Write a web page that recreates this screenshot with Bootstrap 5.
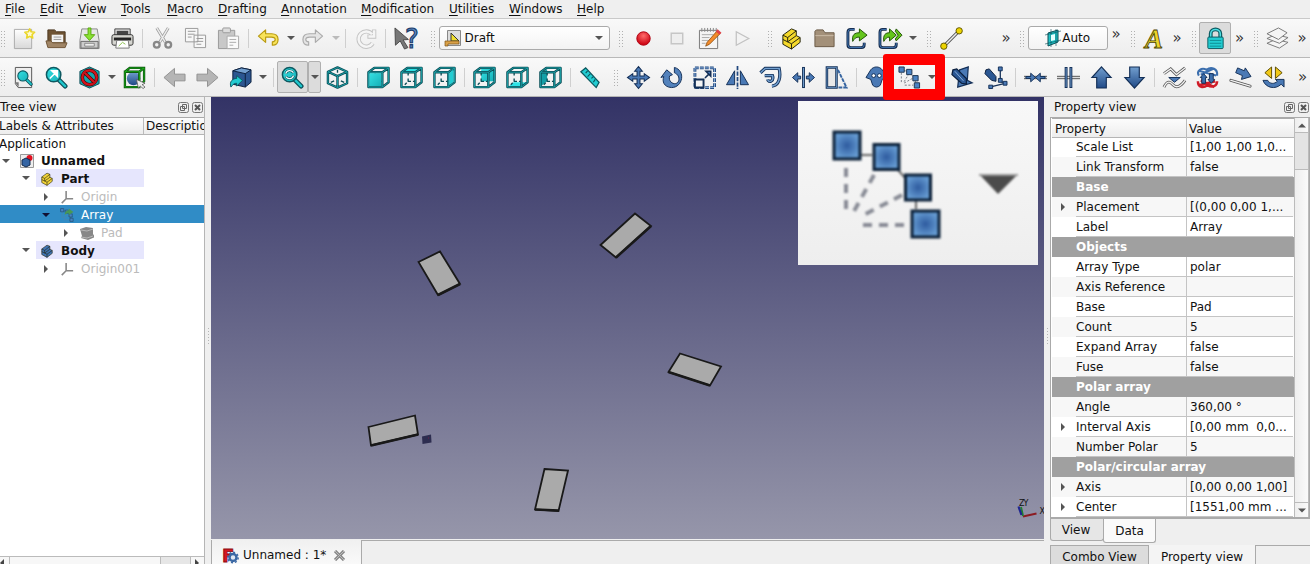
<!DOCTYPE html>
<html lang="en">
<head>
<meta charset="utf-8">
<title>FreeCAD</title>
<link href="https://cdn.jsdelivr.net/npm/bootstrap@5.3.0/dist/css/bootstrap.min.css" rel="stylesheet">
<style>
body{font:12px/16px "DejaVu Sans",sans-serif;color:#111;background:#efefef;height:564px;width:1310px;overflow:hidden}
.menus{height:18px;padding-left:5px;background:#efefef}
.menus a{color:#111;text-decoration:none;white-space:pre;line-height:18px}
.menus u{text-underline-offset:2px}
.bar{height:39px;border-top:1px solid #c9c9c9;background:linear-gradient(#f9f9f9,#ededed)}
.bar2{height:40px;border-bottom:1px solid #b5b5b5;border-top-color:#b8b8b8}
.tool{width:33px;height:32px;flex:none;display:flex;align-items:center;justify-content:center}
.tool svg{width:23px;height:23px;display:block;overflow:visible}
.drop{width:11px;flex:none;display:flex;justify-content:center}
.drop::before{content:"";border:4px solid transparent;border-top-color:#555;border-bottom:0}
.off::before{border-top-color:#bbb}
.rule{width:7px;flex:none;display:flex;justify-content:center}
.rule::before{content:"";width:1px;height:19px;background:#cfcfcf}
.grip{width:16.5px;flex:none;height:17px;padding-left:8px}
.grip::before{content:"";display:block;width:6px;height:17px;background:radial-gradient(circle,#b0b0b0 .8px,transparent 1px) 0 0/3px 3px}
.grip0{width:7px;padding-left:0}
.more{flex:none;color:#333;font-size:15px;line-height:12px;text-align:center}
.combo{width:172px;height:24px;border:1px solid #aaa;border-radius:3px;background:linear-gradient(#fff,#f3f3f3)}
.pressed{border:1px solid #b0b0b0;background:#dcdcdc;border-radius:2px}
.frame{position:absolute;left:-10px;top:-7px;width:62px;height:46px;border:10px solid red;border-width:11px 10px 11px 11px;border-radius:3px;z-index:4}
.left-pane{width:205px;border-right:1px solid #b5b5b5}
.titlebar{height:20px;line-height:20px}
.titlebar svg{width:11px;height:11px}
.cols{height:18px;border-top:1px solid #aaa;border-bottom:1px solid #b5b5b5;background:linear-gradient(#fcfcfc,#ededed);line-height:17px}
.tree-row{height:18px;line-height:18px;white-space:nowrap}
.nudge{padding-top:1px}
.tree-row svg{width:14px;height:14px;flex:none}
.caret{width:20px;flex:none;display:flex;justify-content:center}
.caret::before{content:"";border:4px solid transparent;border-top-color:#555;border-bottom:0}
.sel .caret::before{border-top-color:#113}
.shut::before{border:4px solid transparent;border-left-color:#555;border-right:0}
.lav{background:#e6e6fd;width:108px;height:18px}
.sel{background:#308cc6;color:#fff}
.dim{color:#bbb}
.scene{height:442px;background:linear-gradient(#333366,#9696aa)}
.loupe{position:absolute;left:587px;top:4px;width:240px;height:164px;background:linear-gradient(#f8f8f8,#eee)}
.doc-tab{width:151px;border-right:1px solid #aaa;border-left:1px solid #aaa;background:linear-gradient(#f0f0f0,#fafafa)}
.right-pane{width:260px}
.props{border:1px solid #aaa;border-bottom:2px solid #aaa;height:402px;padding:0 0 0 1px;background:#fff}
.prow{height:20px;line-height:20px;display:flex}
.prow>i{width:24px;flex:none;display:flex;align-items:center;padding-left:9px}
.prow>i.x::before{content:"";border:4px solid transparent;border-left-color:#555;border-right:0}
.prow>b,.prow>span{border-bottom:1px solid #c4c4c4;font-weight:400;white-space:pre}
.prow>b{width:111px;border-right:1px solid #c4c4c4;flex:none}
.prow>span{flex:1;padding-left:3px;margin-right:1px}
.alt{background:#f7f7f7}
.grp{background:#a0a0a0;color:#fff;font-weight:700;padding-left:24px}
.sb{width:14px;border-left:1px solid #bbb;background:linear-gradient(90deg,#eee,#fafafa)}
.sb div{display:flex;align-items:center;justify-content:center}
.tab-b{border:1px solid #aaa;text-align:center}
</style>
<script src="https://cdn.jsdelivr.net/npm/bootstrap@5.3.0/dist/js/bootstrap.bundle.min.js"></script>
</head>
<body>
<svg width="0" height="0" class="position-absolute">
<defs>
<linearGradient id="gb" x1="0" y1="0" x2="0" y2="1"><stop offset="0" stop-color="#729fcf"/><stop offset="1" stop-color="#204a87"/></linearGradient>
<linearGradient id="gt" x1="0" y1="0" x2="1" y2="1"><stop offset="0" stop-color="#34e0e2"/><stop offset="1" stop-color="#16b0b8"/></linearGradient>
<linearGradient id="gg" x1="0" y1="0" x2="0" y2="1"><stop offset="0" stop-color="#fff"/><stop offset="1" stop-color="#d8d8d8"/></linearGradient>
<radialGradient id="gr" cx=".5" cy=".3" r=".6"><stop offset="0" stop-color="#ff6a6a"/><stop offset="1" stop-color="#d00a18"/></radialGradient>
</defs>
<!-- wireframe cube shared by the view icons -->
<symbol id="wire" viewBox="0 0 24 24"><g fill="none" stroke-linejoin="round"><path d="M8.500 7v3M8.500 13v3h3M5 19.500l2-2M13.500 16h2" stroke="#0b4c55" stroke-width="1.400"/><path d="M1.500 6.500h14.500v15.500H1.500zM1.500 6.500l6-4.500H22.500V17L16 22M16 6.500l6.500-4.500" stroke="#0b4c55" stroke-width="2.500"/><path d="M1.500 6.500h14.500v15.500H1.500zM1.500 6.500l6-4.500H22.500V17L16 22M16 6.500l6.500-4.500" stroke="#1da9af" stroke-width=".9"/></g></symbol>
<symbol id="lens" viewBox="0 0 24 24"><path d="M14 14l7 7" stroke="#0b4c55" stroke-width="5" stroke-linecap="round"/><path d="M14 14l7 7" stroke="#1fc6cc" stroke-width="2.500" stroke-linecap="round"/><circle cx="9" cy="9" r="7.500" fill="url(#gt)" stroke="#0d5961" stroke-width="1.600"/></symbol>
<symbol id="brick" viewBox="0 0 24 24"><g stroke-width="1" stroke-linejoin="round" stroke="#20200a"><path d="M3 8.500L12 2l5 2v5l4 2v5l-9 7-9-5z"/><path d="M3 8.500l5 2.500 9-7M8 11v4.500l4 2 9-6.500M12 17.500V23M3 13l5 2.500 9-6.500" fill="none"/></g></symbol>
<symbol id="axes" viewBox="0 0 16 16"><path d="M7 1v9h8M7 10l-5 5" fill="none" stroke="#888" stroke-width="1.800"/></symbol>
<symbol id="undo" viewBox="0 0 24 24"><path d="M1.500 9.500L9 3v4h6c4.500 0 7 2.500 7 6s-2 6-6 6v-3.500c2-.2 3-1 3-2.500s-1.300-2.500-4-2.500H9v5.500z" stroke-width="1.200" stroke-linejoin="round"/></symbol>
<symbol id="polar" viewBox="0 0 24 24"><path d="M4 4l7 2 6 6 2 7" fill="none" stroke="#444" stroke-width=".6"/><path d="M3.500 7v11M11.500 8L6 17M15 13l-9 5M7 20h9" fill="none" stroke="#777d87" stroke-width="1" stroke-dasharray="2.200 1.600"/><g fill="#4b82c2" stroke="#1d3450" stroke-width="1"><path d="M1 1h5.500v5.500H1zM9 3.500h5.500V9H9zM15.500 10h5.500v5.500h-5.500zM17 17.500h5.500V23H17z"/></g></symbol>
<symbol id="float" viewBox="0 0 11 11"><rect x=".5" y=".5" width="10" height="10" rx="2" fill="none" stroke="#777"/><path d="M4.500 2.500h4v4h-4zM2.500 4.500h4v4h-4z" fill="none" stroke="#666"/></symbol>
<symbol id="shutx" viewBox="0 0 11 11"><rect x=".5" y=".5" width="10" height="10" rx="2" fill="none" stroke="#777"/><path d="M3 3l5 5M8 3l-5 5" stroke="#555" stroke-width="2"/></symbol>
</svg>

<nav class="menus d-flex"><a style="width:35px"><u>F</u>ile</a><a style="width:38px"><u>E</u>dit</a><a style="width:43px"><u>V</u>iew</a><a style="width:46px"><u>T</u>ools</a><a style="width:51px"><u>M</u>acro</a><a style="width:63px"><u>D</u>rafting</a><a style="width:80px"><u>A</u>nnotation</a><a style="width:88px"><u>M</u>odification</a><a style="width:60px"><u>U</u>tilities</a><a style="width:68px"><u>W</u>indows</a><a><u>H</u>elp</a></nav>

<div class="bar d-flex align-items-center">
<span class="grip grip0"></span>
<span class="tool"><svg viewBox="0 0 24 24"><path d="M2.500 2.500h18v20h-18z" fill="url(#gg)" stroke="#aaa"/><path d="M18.500 2l1.500 3 3.600.5-2.600 2.500.6 3.500-3.100-1.700-3.200 1.700.6-3.500-2.500-2.500 3.500-.5z" fill="#fffbd0" stroke="#ead62a" stroke-width="1.700" stroke-linejoin="round"/></svg></span>
<span class="tool"><svg viewBox="0 0 24 24"><path d="M3 19V3h7l2 2h9v14z" fill="#6f5434" stroke="#4a361f"/><path d="M7 8h12v8H7z" fill="#f3f3f3"/><path d="M9 10.500h8M9 13h8" stroke="#999"/><path d="M1 14.500h5l2 2h15l-2 5H3z" fill="#a08566" stroke="#6f5434"/></svg></span>
<span class="tool"><svg viewBox="0 0 24 24"><path d="M4 2h16l2 12v8.500H2V14z" fill="#e6e6e6" stroke="#888"/><path d="M3 15h18v7H3z" fill="#ccc" stroke="#666"/><path d="M7 17h10v3H7z" fill="#eee" stroke="#888"/><path d="M10.500 1h3v7h4l-5.500 6-5.500-6h4z" fill="#8ae234" stroke="#5aa80e"/></svg></span>
<span class="tool"><svg viewBox="0 0 24 24"><path d="M4 2h16v9H4z" fill="#ddd" stroke="#444"/><path d="M6 4h12v5H6z" fill="#444"/><rect x="1" y="8" width="22" height="11" rx="2" fill="#d5d5d0" stroke="#333"/><path d="M3 11h18v3H3z" fill="#222"/><path d="M6 14h12l1 8H5z" fill="#fff" stroke="#777"/><path d="M8 20l4-4 3 2" stroke="#8ac04a" fill="none"/></svg></span>
<span class="rule"></span>
<span class="tool"><svg viewBox="0 0 24 24"><path d="M6 1l9 15M18 1L9 16" stroke="#999" stroke-width="3"/><path d="M6 1l9 15M18 1L9 16" stroke="#ececec" stroke-width="1.500"/><g fill="none" stroke="#888" stroke-width="2.400"><circle cx="6" cy="18.500" r="3"/><circle cx="18" cy="18.500" r="3"/></g></svg></span>
<span class="tool"><svg viewBox="0 0 24 24"><g fill="#f7f7f7" stroke="#999"><path d="M1.500 1.500h13v14h-13zM10.500 8.500h12v13h-12z"/></g><path d="M4 4.500h8M4 7.500h7M4 10.500h4M13 12h7M13 15h7M13 18h5" stroke="#999"/></svg></span>
<span class="tool"><svg viewBox="0 0 24 24"><path d="M1.500 3.500h17v19h-17z" fill="#c8c8c8" stroke="#999"/><rect x="6" y="1" width="8" height="5" rx="1" fill="#ddd" stroke="#999"/><path d="M10.500 9.500h12v13h-12z" fill="#fafafa" stroke="#aaa"/><path d="M13 13h7M13 16h7M13 19h4" stroke="#aaa"/></svg></span>
<span class="rule"></span>
<span class="tool"><svg fill="#f8e35a" stroke="#b89a10"><use href="#undo"/></svg></span><span class="drop"></span>
<span class="tool"><svg fill="#e4e4e4" stroke="#aaa" viewBox="0 0 24 24"><use href="#undo" width="24" height="24" transform="matrix(-1 0 0 1 24 0)"/></svg></span><span class="drop off" style="width:13px"></span>
<span class="rule"></span>
<span class="tool"><svg viewBox="0 0 24 24"><g fill="none"><path d="M19 7.500a8 8 0 1 0 .5 9.500M21 2.500v7.500h-7" stroke="#c4c4c4" stroke-width="4.500"/><path d="M19 7.500a8 8 0 1 0 .5 9.500M21 3.500v6.500h-6" stroke="#f5f5f5" stroke-width="2.600"/></g></svg></span>
<span class="rule"></span>
<span class="tool"><svg viewBox="0 0 24 24"><text x="11.500" y="22" font-family="DejaVu Sans" font-size="27" fill="#5c8cc6" stroke="#1d3d6b" stroke-width="1.200">?</text><path d="M1 1l14 12-5.500.5 5 8-3.500 1.500-4.500-8.500-5 4.500z" fill="#777" stroke="#4a4a4a"/></svg></span>
<span class="grip"></span>
<span class="combo d-flex align-items-center ps-1"><svg width="17" height="17" viewBox="0 0 17 17"><path d="M3.500.5h13v15h-13z" fill="#ddd" stroke="#888"/><path d="M7 3v8h8z" fill="#f0df30" stroke="#333"/><path d="M1 11h14v3H4v2H1z" fill="#d9a047" stroke="#7b5518" stroke-width=".7"/></svg><span class="ms-1">Draft</span><span class="drop ms-auto me-1"></span></span>
<span class="grip" style="width:17.500px"></span>
<span class="tool"><svg viewBox="0 0 24 24"><circle cx="12" cy="12" r="7" fill="url(#gr)" stroke="#b00010"/></svg></span>
<span class="tool"><svg viewBox="0 0 24 24"><path d="M6.500 6.500h12v11h-12z" fill="#eee" stroke="#c6c6c6" stroke-width="1.500"/></svg></span>
<span class="tool"><svg viewBox="0 0 24 24"><path d="M1.500 3.500h19v19h-19z" fill="#f4f4f4" stroke="#777"/><path d="M4 1v4M7 1v4M10 1v4M13 1v4M16 1v4M19 1v4" stroke="#888"/><path d="M4 8h12M4 11h8M4 14h7M4 17h4" stroke="#aaa"/><path d="M20 4l3 3-11 11-4 2 1.500-4z" fill="#f38b2a" stroke="#84480c" stroke-width=".8"/><path d="M19.500 3.500l4 3.500" stroke="#df4248" stroke-width="3"/></svg></span>
<span class="tool"><svg viewBox="0 0 24 24"><path d="M5.500 5v14L18.500 12z" fill="#f3f3f3" stroke="#c2c2c2" stroke-width="1.300"/></svg></span>
<span class="grip" style="width:16px"></span>
<span class="tool"><svg fill="#f5d92b"><use href="#brick"/></svg></span>
<span class="tool"><svg viewBox="0 0 24 24"><path d="M2 20.500V4.500L3.500 3h7l2 3H22v14.500z" fill="#a39079" stroke="#6b5a46"/><path d="M2.500 9h19" stroke="#cbbba6"/></svg></span>
<span class="tool"><svg viewBox="0 0 24 24"><path d="M9 2.500H5Q2 2.500 2 5.500v13q0 3 3 3h11q3 0 3-3v-2" fill="none" stroke="#12284a" stroke-width="3"/><path d="M9 2.500H5Q2 2.500 2 5.500v13q0 3 3 3h11q3 0 3-3v-2" fill="none" stroke="#467bb8" stroke-width="1"/><path d="M7 15c-1-7 2-9 7-9V2l8 6.500-8 6v-4c-4 0-5 1.500-7 4.500z" fill="#64c51c" stroke="#205204"/></svg></span>
<span class="tool"><svg viewBox="0 0 24 24"><path d="M8 2.500H4Q1 2.500 1 5.500v13q0 3 3 3h11q3 0 3-3v-2" fill="none" stroke="#12284a" stroke-width="3"/><path d="M8 2.500H4Q1 2.500 1 5.500v13q0 3 3 3h11q3 0 3-3v-2" fill="none" stroke="#467bb8" stroke-width="1"/><path d="M5 15c-1-7 2-9 6-9V2l7 6.500-7 6v-4c-3 0-4 1.500-6 4.500zM18 2l6 6.500-6 6-1-2 3-4-3-4z" fill="#64c51c" stroke="#205204"/></svg></span><span class="drop"></span>
<span class="grip"></span>
<span class="tool"><svg viewBox="0 0 24 24"><path d="M4 20L20 4" stroke="#555" stroke-width="3.500"/><path d="M4 20L20 4" stroke="#eee" stroke-width="1.500"/><g fill="#edd400" stroke="#625800"><circle cx="4" cy="20" r="3.300"/><circle cx="20" cy="4" r="3.300"/></g></svg></span>
<span class="more" style="width:43.500px;padding-left:33px">»</span><span class="grip"></span>
<span class="combo d-flex align-items-center justify-content-center" style="width:80px"><svg width="16" height="18" viewBox="0 0 16 18"><path d="M3 4l10-3v12L3 17z" fill="#20c5c9" stroke="#0b4c55"/><path d="M0 6l16-4M0 15l16-4M6 0v18M11 0v17" stroke="#0b4c55" stroke-width=".6"/><path d="M6 6l4-1v6l-4 1z" fill="#e5ffff"/></svg><span style="margin-left:1px">Auto</span></span>
<span class="more pb-2" style="width:17px">»</span><span class="grip" style="width:12px;padding-left:5px"></span>
<span class="tool"><svg viewBox="0 0 24 24"><text x="3" y="21.500" font-family="Liberation Serif" font-weight="bold" font-style="italic" font-size="28" fill="#edd42a" stroke="#4c4400" stroke-width=".9">A</text></svg></span>
<span class="more" style="width:15px">»</span><span class="grip" style="width:14.500px;padding-left:6px"></span>
<span class="tool pressed" style="width:32px"><svg viewBox="0 0 24 24"><path d="M7 11V7c0-6 10-6 10 0v4" fill="none" stroke="#0b5960" stroke-width="4"/><path d="M7 11V7c0-6 10-6 10 0v4" fill="none" stroke="#4de0e4" stroke-width="1.600"/><rect x="4" y="10.500" width="16" height="12" rx="1" fill="#22cdd2" stroke="#0b5960"/><path d="M6 14h12M6 17h12M6 20h12" stroke="#0f8c93"/></svg></span>
<span class="more" style="width:17px">»</span><span class="grip" style="width:13px;padding-left:5px"></span>
<span class="tool"><svg viewBox="0 0 24 24"><g fill="#f5f5f5" stroke="#777" stroke-linejoin="round"><path d="M1 17l9-4 13 3-9 6z"/><path d="M1 12l9-4 13 3-9 6z"/><path d="M1 7l12-6 9 5-9 7z"/></g></svg></span>
<span class="more" style="width:16px">»</span>
</div>

<div class="bar bar2 d-flex align-items-center">
<span class="grip grip0"></span>
<span class="tool"><svg viewBox="0 0 24 24"><path d="M3.500 1.500h17v21h-14l-3-4z" fill="#eee" stroke="#555"/><path d="M3 17h4v5" fill="#777"/><use href="#lens" x="5" y="4" width="17" height="17"/></svg></span>
<span class="tool"><svg viewBox="0 0 24 24"><use href="#lens" width="24" height="24"/><path d="M5 13l5-5M7 5h6v6z" fill="#fff" stroke="#fff" stroke-width="1.500"/></svg></span>
<span class="tool"><svg viewBox="0 0 24 24"><path d="M12 1l10 4.500v13L12 23 2 18.500v-13z" fill="#15a5ad" stroke="#0b4c55"/><g fill="none"><circle cx="12" cy="12" r="7.500" stroke="#400" stroke-width="3.600"/><circle cx="12" cy="12" r="7.500" stroke="#d3131c" stroke-width="2.400"/><path d="M7 7l10 10" stroke="#400" stroke-width="3.600"/><path d="M7 7l10 10" stroke="#d3131c" stroke-width="2.400"/></g></svg></span><span class="drop" style="width:12px"></span>
<span class="tool"><svg viewBox="0 0 24 24"><circle cx="11" cy="13" r="7" fill="url(#gb)"/><path d="M2 6h15v16H2zM2 6l5-4h15v14l-5 5M17 6l5-4" fill="none" stroke="#064a08" stroke-width="2.400"/><path d="M2 6h15v16H2zM2 6l5-4h15v14l-5 5M17 6l5-4" fill="none" stroke="#1da91d" stroke-width="1.100"/><path d="M14 14l9 4-3 1.500 3 2.500-2 1.500-3-2.500-2 2z" fill="#eee" stroke="#555" stroke-width=".8"/></svg></span>
<span class="rule"></span>
<span class="tool"><svg viewBox="0 0 24 24"><path d="M1 12L12 2.500v6h11v7H12v6z" fill="#b5b5b5" stroke="#909090"/></svg></span>
<span class="tool"><svg viewBox="0 0 24 24"><path d="M23 12L12 2.500v6H1v7h11v6z" fill="#b5b5b5" stroke="#909090"/></svg></span>
<span class="tool"><svg viewBox="0 0 24 24"><path d="M4 5l9-3 10 2v13l-6 5-13-3z" fill="#2c5691" stroke="#0b1f3e"/><path d="M4 5l9-3 10 2-6 4z" fill="#729fcf" stroke="#0b1f3e"/><path d="M17 8v14" stroke="#0b1f3e"/><path d="M2 22c-2-6 2-9 6-9v-3l6 5-6 6v-3c-2 0-4 1-6 4z" fill="#22cbd1" stroke="#0b5960"/></svg></span><span class="drop" style="width:12px"></span>
<span class="rule" style="width:8px"></span>
<span class="tool pressed" style="width:31px"><svg viewBox="0 0 24 24"><use href="#lens" width="24" height="24"/><path d="M5 8c1-4 6-4 8-1M13 10c-1 4-6 4-8 1" fill="none" stroke="#0b4c55" stroke-width="2.600"/><path d="M5 8c1-4 6-4 8-1M13 10c-1 4-6 4-8 1" fill="none" stroke="#e8ffff" stroke-width="1.400"/></svg></span><span class="tool pressed" style="width:13px"><span class="drop"></span></span>
<span class="tool"><svg viewBox="0 0 24 24"><g fill="none" stroke-linejoin="round"><path d="M12 1.500l10 4.500v12L12 22.500 2 18V6zM2 6l10 4.500L22 6M12 10.500v12" stroke="#0b4c55" stroke-width="2.500"/><path d="M12 1.500l10 4.500v12L12 22.500 2 18V6zM2 6l10 4.500L22 6M12 10.500v12" stroke="#1da9af" stroke-width=".9"/><path d="M12 4v3M5 17l3.500-1.500M19 17l-3.500-1.500" stroke="#0b4c55" stroke-width="1.400"/></g></svg></span>
<span class="rule" style="width:7.500px"></span>
<span class="tool"><svg viewBox="0 0 24 24"><use href="#wire"/><path d="M2.500 7.500H15V21H2.500z" fill="url(#gt)"/></svg></span>
<span class="tool"><svg viewBox="0 0 24 24"><path d="M2 6.500L8 2h14l-6 4.500z" fill="#2fe3e6"/><use href="#wire"/></svg></span>
<span class="tool"><svg viewBox="0 0 24 24"><use href="#wire"/><path d="M17 7.200L21.500 3.500v13L17 20z" fill="#22cdd2"/></svg></span>
<span class="rule"></span>
<span class="tool"><svg viewBox="0 0 24 24"><path d="M8.500 3H22v13H8.500z" fill="url(#gt)"/><use href="#wire"/></svg></span>
<span class="tool"><svg viewBox="0 0 24 24"><path d="M2 22l6-5h14l-6 5z" fill="#2fe3e6"/><use href="#wire"/></svg></span>
<span class="tool"><svg viewBox="0 0 24 24"><path d="M2 7l6.500-4v13L2 21z" fill="#149fa7"/><use href="#wire"/></svg></span>
<span class="rule"></span>
<span class="tool" style="width:31px"><svg viewBox="0 0 24 24"><path d="M3 6l5-4 14 15-3 5.500z" fill="#22cdd2" stroke="#0b5960" stroke-width="1.300"/><path d="M10 5L8 7.500M13 8l-3 3M16 11l-2 2M18 14l-2 3" stroke="#0b5960" stroke-width="1.200"/></svg></span>
<span class="grip" style="width:17.500px;padding-left:8px"></span>
<span class="tool"><svg viewBox="0 0 24 24"><path d="M12 .500l4 5h-2.500v5H18V8l5.500 4-5.500 4v-2.500h-4.500v5H16l-4 5-4-5h2.500v-5H6V16L.5 12 6 8v2.500h4.500v-5H8z" fill="#4a79b5" stroke="#132f57" stroke-width="1.100"/></svg></span>
<span class="tool"><svg viewBox="0 0 24 24"><path d="M1 12l6-8 6 5-3 1.500c-2 7 7 11 9.500 5 1-4-1-7-4.500-8.500V1.500c12 3 9 21-3 21C4 22 2 16 4 11z" fill="#5382bc" stroke="#132f57"/></svg></span>
<span class="tool"><svg viewBox="0 0 24 24"><path d="M2 2h20.500v20.500H2z" fill="none" stroke="#21487f" stroke-width="3" stroke-dasharray="4 1.200"/><path d="M2 2h20.500v20.500H2z" fill="none" stroke="#8fb3dd" stroke-width="1" stroke-dasharray="4 1.200"/><path d="M2 14h9v8.500H2z" fill="#f4f4f4" stroke="#132f57" stroke-width="2"/><path d="M12.500 12.500l4-4M13.500 5.500h5v5z" stroke="#132f57" stroke-width="1.600" fill="#4a79b5"/></svg></span>
<span class="tool"><svg viewBox="0 0 24 24"><path d="M9 5v14.500H.5zM15 5v14.500h8.500z" fill="#4a79b5" stroke="#132f57"/><path d="M12 0v24" stroke="#21487f" stroke-width="1.800" stroke-dasharray="4.500 1.200"/></svg></span>
<span class="tool"><svg viewBox="0 0 24 24"><g fill="none"><path d="M1.500 7l5-4.500h14.500c2 9 0 18-7.500 18.500M6 10h8c2 6-4 8-5 4" stroke="#132f57" stroke-width="3.400"/><path d="M1.500 7l5-4.500h14.500c2 9 0 18-7.500 18.500M6 10h8c2 6-4 8-5 4" stroke="#729fcf" stroke-width="1.600"/></g></svg></span>
<span class="tool"><svg viewBox="0 0 24 24"><path d="M12 1v22" stroke="#132f57" stroke-width="3"/><path d="M12 2v20" stroke="#729fcf"/><path d="M.5 12l5.500-5v3.500h3v3H6V17zM23.500 12L18 7v3.500h-3v3h3V17z" fill="#4a79b5" stroke="#132f57"/></svg></span>
<span class="tool"><svg viewBox="0 0 24 24"><path d="M2 1.500h10v21H2z" fill="#e8e8e8" stroke="#132f57" stroke-width="2.600"/><path d="M2 1.500h10v21H2z" fill="none" stroke="#729fcf" stroke-width=".8"/><path d="M13.500 4l9 18.500h-9" fill="none" stroke="#3564a0" stroke-width="2" stroke-dasharray="4 1"/></svg></span>
<span class="rule"></span>
<span class="tool"><svg viewBox="0 0 24 24"><path d="M6 4c3-4 9-4 12 0l5 7-5 3-2 6q-4 4-8 0l-2-6-5-2z" fill="#4a79b5" stroke="#132f57"/><circle cx="9" cy="10" r="2" fill="#fff" stroke="#132f57"/><circle cx="15" cy="10" r="2" fill="#fff" stroke="#132f57"/></svg></span>
<span class="position-relative d-flex align-items-center"><span class="tool"><svg><use href="#polar"/></svg></span><span class="drop"></span><span class="frame"></span></span>
<span class="flex-shrink-0" style="width:8.500px"></span>
<span class="tool"><svg viewBox="0 0 24 24"><path d="M9 4l9-3-1 14 5 2.500L7 22z" fill="#4a79b5" stroke="#132f57" stroke-width="1.300"/><path d="M2 4l4-1 10 10v6l-5-1L1 9z" fill="#2b5793" stroke="#0b1f3e" stroke-width="1.300"/><path d="M4 5.500l9 10" stroke="#8db3df"/></svg></span>
<span class="tool"><svg viewBox="0 0 24 24"><path d="M17 3v13l5 2-16 4" fill="none" stroke="#132f57" stroke-width="1.300"/><g fill="#4a79b5" stroke="#132f57"><path d="M15 1h4v4h-4zM15 13h4v4h-4zM20 16h4v4h-4zM5 20h4v3.500H5z"/></g><path d="M2 4l3.500-1 7 8v5l-4.500-1-7-7z" fill="#2b5793" stroke="#0b1f3e"/></svg></span>
<span class="rule"></span>
<span class="tool"><svg viewBox="0 0 24 24"><path d="M0 12h24" stroke="#555" stroke-width="3.500"/><path d="M0 12h24" stroke="#ddd" stroke-width="1.500"/><path d="M12 12L7 7.500V11H2v2h5v3.500zM12 12l5-4.500V11h5v2h-5v3.500z" fill="#4a79b5" stroke="#132f57"/></svg></span>
<span class="tool"><svg viewBox="0 0 24 24"><path d="M0 12h24" stroke="#555" stroke-width="3.500"/><path d="M0 12h24" stroke="#ddd" stroke-width="1.500"/><path d="M9.500 1v22M14.500 1v22" stroke="#132f57" stroke-width="3"/><path d="M9.500 2v20M14.500 2v20" stroke="#729fcf"/></svg></span>
<span class="tool"><svg viewBox="0 0 24 24"><path d="M12 1l10 11h-5v11H7V12H2z" fill="url(#gb)" stroke="#132f57" stroke-width="1.200"/></svg></span>
<span class="tool"><svg viewBox="0 0 24 24"><path d="M12 23l10-11h-5V1H7v11H2z" fill="url(#gb)" stroke="#132f57" stroke-width="1.200"/></svg></span>
<span class="rule"></span>
<span class="tool"><svg viewBox="0 0 24 24"><g fill="none"><path d="M1 8l7-5 6 6 9-7M1 22c4-8 7-5 10-2s7 2 12-5" stroke="#555" stroke-width="3"/><path d="M1 8l7-5 6 6 9-7M1 22c4-8 7-5 10-2s7 2 12-5" stroke="#f2f2f2" stroke-width="1.400"/></g><path d="M6 12h12l-6 5z" fill="#4a79b5" stroke="#132f57"/></svg></span>
<span class="tool"><svg viewBox="0 0 24 24"><g fill="none"><path d="M3 10c-3-5 3-9 8-6 5-4 12-1 11 6M3 5l18 5M5 9l13-6" stroke="#3c6fae" stroke-width="2.200"/><path d="M2 16c0 7 6 7 10 4 5 3 10 1 10-4M3 20l17-4M5 15l14 7" stroke="#cf1b27" stroke-width="2.600"/></g><path d="M8 8l3.500 4H10v6H6v-6H4.500zM16 18l-3.500-4H14V8h4v6h1.500z" fill="#3c6fae" stroke="#132f57"/></svg></span>
<span class="tool"><svg viewBox="0 0 24 24"><path d="M2 15l20 6" stroke="#555" stroke-width="3.200" stroke-linecap="round"/><path d="M2 15l20 6" stroke="#f2f2f2" stroke-width="1.500" stroke-linecap="round"/><path d="M9 2l7 3 1-3 6 9-10 3 1-4-7-3z" fill="#4a79b5" stroke="#132f57"/></svg></span>
<span class="tool"><svg viewBox="0 0 24 24"><path d="M10 1v12L3 7zM14 1v12l7-6z" fill="#f0c818" stroke="#5b4b00"/><path d="M1 15h5c2 4 7 4 10 1l-2-2h9v8l-3-3c-6 6-16 4-19-4z" fill="#4a79b5" stroke="#132f57"/></svg></span>
<span class="more" style="width:26px">»</span>
</div>

<main class="d-flex" style="height:467px">
<section class="left-pane d-flex flex-column">
<div class="titlebar d-flex align-items-center pe-1"><span class="me-auto" style="margin-top:-1px">Tree view</span><svg class="me-1"><use href="#float"/></svg><svg style="margin:0 -3px 0 -1px"><use href="#shutx"/></svg></div>
<div class="cols d-flex overflow-hidden"><span style="width:144px;flex:none;text-indent:-1px;border-right:1px solid #bbb">Labels &amp; Attributes</span><span style="padding-left:2px">Description</span></div>
<div class="bg-white flex-grow-1">
<div class="tree-row" style="height:16px;line-height:18px;text-indent:-1px">Application</div>
<div class="tree-row nudge d-flex align-items-center fw-bold" style="margin-left:-4px"><span class="caret"></span><svg viewBox="0 0 14 14" style="margin:0 7px 0 4px"><path d="M.5.500h13v13H.5z" fill="#eee" stroke="#999"/><circle cx="9.500" cy="4" r="3" fill="#e01020"/><path d="M2 6l4-2 4 2v5l-4 2-4-2z" fill="#3465a4" stroke="#122a4c"/></svg>Unnamed</div>
<div class="tree-row d-flex align-items-center fw-bold" style="margin-left:16px"><span class="caret"></span><span class="lav nudge d-flex align-items-center"><svg fill="#f2d43a" style="margin:0 7px 0 4px"><use href="#brick"/></svg>Part</span></div>
<div class="tree-row nudge d-flex align-items-center dim" style="margin-left:36px"><span class="caret shut"></span><svg style="margin:0 7px 0 4px"><use href="#axes"/></svg>Origin</div>
<div class="tree-row nudge d-flex align-items-center sel" style="padding-left:36px"><span class="caret"></span><svg viewBox="0 0 24 24" style="margin:0 7px 0 4px;opacity:.8"><use href="#polar"/><path d="M8 12c0-5 3-8 7-8V1l8 6-8 5V9c-3 0-5 1-7 3z" fill="#4f9b3a"/></svg>Array</div>
<div class="tree-row nudge d-flex align-items-center dim" style="margin-left:56px"><span class="caret shut"></span><svg viewBox="0 0 14 14" style="margin:0 7px 0 4px"><path d="M0 3l6-2 7 1v6l2 3-7 3-7-2 1-2z" fill="#888"/><path d="M1 4l6 1 6-2M1 11l6 1 6-2" fill="none" stroke="#ccc" stroke-width=".7"/></svg>Pad</div>
<div class="tree-row d-flex align-items-center fw-bold" style="margin-left:16px"><span class="caret"></span><span class="lav nudge d-flex align-items-center"><svg fill="#3f73b2" style="margin:0 7px 0 4px"><use href="#brick"/></svg>Body</span></div>
<div class="tree-row nudge d-flex align-items-center dim" style="margin-left:36px"><span class="caret shut"></span><svg style="margin:0 7px 0 4px"><use href="#axes"/></svg>Origin001</div>
</div>
<div class="d-flex" style="height:8px;border-top:1px solid #bbb;background:#f7f7f7"><svg width="10" height="8"><path d="M4 2v8L0 6z" fill="#444"/><path d="M9.500 0v8" stroke="#bbb"/></svg><span class="ms-auto" style="width:31px;background:#e6e6e6;border:1px solid #bbb;border-width:0 1px"></span><svg width="13" height="8"><path d="M4 2v8l4-4z" fill="#444"/></svg></div>
</section>
<div class="d-flex align-items-center" style="width:6px"><span style="width:2px;height:18px;margin:10px 0 0 2px;background:radial-gradient(circle,#b5b5b5 .8px,transparent 1px) 0 0/3px 3px"></span></div>

<section class="position-relative" style="width:833px">
<div class="scene"><svg class="d-block" width="833" height="442" viewBox="211 97 833 442">
<g fill="#aaa" stroke="#191919" stroke-width="1.800">
<path d="M418.500 262L440 251.500 460 284 438 295zM635 213.500l16 12.500-35 31.500-15.500-12.500zM680 353.500l41 13-11 19-41.500-13.500zM368.500 427l46.500-11.500 3 19-47 11zM544.500 469l23.500 1.500-9.500 40.500-23.500-1.500z"/></g>
<path d="M438 295l22-11M616 257.500l35-31.500M710 385.500l-41.500-13.500M371 445.500l47-11M558.500 510.500l-23.500-1" stroke="#191919" stroke-width="2.600"/>
<path d="M422 436.500l9-2 .5 8-9 1.500z" fill="#2d2d50"/><path d="M428 438h1" stroke="#702048"/>
<path d="M1023 516.500l13.500-3" stroke="#8c1c22" stroke-width="2"/><path d="M1023 516l-2-9" stroke="#208030" stroke-width="2"/><path d="M1021.500 515l-3-8.500" stroke="#1e2590" stroke-width="2.200"/>
<g font-family="DejaVu Sans" font-size="8" fill="#111"><text x="1019" y="506">Z</text><text x="1023.500" y="506">Y</text><text x="1039.500" y="514">X</text></g>
</svg></div>
<div class="loupe"><svg class="d-block" width="240" height="164" viewBox="798 101 240 164" style="filter:blur(1px)">
<defs><radialGradient id="sq"><stop offset="0" stop-color="#2e5b9f"/><stop offset="1" stop-color="#659bd2"/></radialGradient></defs>
<path d="M861 155h11M898 170l8 9M916 200v9" stroke="#666" stroke-width="2"/>
<path d="M846 168v44M874 175l-21 38M902 195l-42 22M863 225h42" stroke="#888b95" stroke-width="4" stroke-dasharray="9 7" fill="none"/>
<g fill="url(#sq)" stroke="#0b2038" stroke-width="3"><rect x="834" y="132" width="26" height="27"/><rect x="874" y="144.500" width="25" height="25"/><rect x="905.500" y="175" width="25" height="25"/><rect x="912" y="211" width="27" height="26"/></g>
<path d="M979 174h39l-20 20z" fill="#4b4b4b"/><path d="M979 175h39" stroke="#999" stroke-width="2"/></svg></div>
<div class="d-flex" style="height:27px;padding-top:1px"><div class="doc-tab d-flex align-items-center ps-2 pt-1"><svg width="17" height="17" viewBox="0 0 17 17" style="margin:0 4px 0 2px"><text x="0" y="15" font-family="DejaVu Sans" font-weight="bold" font-size="18" fill="#d71820" stroke="#8c0b10" stroke-width=".8">F</text><circle cx="11" cy="10.500" r="3.500" fill="#dfe7f2" stroke="#3a68a4" stroke-width="2.500"/><circle cx="11" cy="10.500" r="5.200" fill="none" stroke="#3a68a4" stroke-width="1.500" stroke-dasharray="2 2"/></svg>Unnamed : 1*<svg width="11" height="11" viewBox="0 0 11 11" style="margin-left:8px"><path d="M1 1l9 9M10 1l-9 9" stroke="#888" stroke-width="3.200"/><path d="M1 1l9 9M10 1l-9 9" stroke="#bbb"/></svg></div><div class="flex-grow-1" style="border-top:1px solid #aaa"></div></div>
</section>
<div class="d-flex align-items-center" style="width:6px"><span style="width:2px;height:18px;margin:10px 0 0 2px;background:radial-gradient(circle,#b5b5b5 .8px,transparent 1px) 0 0/3px 3px"></span></div>

<section class="right-pane">
<div class="titlebar d-flex align-items-center ps-1"><span class="me-auto" style="margin-top:-1px">Property view</span><svg class="me-1"><use href="#float"/></svg><svg style="margin-right:1px;margin-left:-1px"><use href="#shutx"/></svg></div>
<div class="props d-flex">
<div style="width:242px" class="overflow-hidden">
<div class="cols d-flex" style="height:20px;line-height:20px"><span style="width:135px;padding-left:3px;border-right:1px solid #bbb">Property</span><span style="padding-left:2px">Value</span></div>
<div style="margin-top:-1px">
<div class="prow"><i></i><b>Scale List</b><span>[1,00 1,00 1,0...</span></div>
<div class="prow alt"><i></i><b>Link Transform</b><span>false</span></div>
<div class="prow grp">Base</div>
<div class="prow alt"><i class="x"></i><b>Placement</b><span>[(0,00 0,00 1,...</span></div>
<div class="prow"><i></i><b>Label</b><span>Array</span></div>
<div class="prow grp">Objects</div>
<div class="prow"><i></i><b>Array Type</b><span>polar</span></div>
<div class="prow alt"><i></i><b>Axis Reference</b><span></span></div>
<div class="prow"><i></i><b>Base</b><span>Pad</span></div>
<div class="prow alt"><i></i><b>Count</b><span>5</span></div>
<div class="prow"><i></i><b>Expand Array</b><span>false</span></div>
<div class="prow alt"><i></i><b>Fuse</b><span>false</span></div>
<div class="prow grp">Polar array</div>
<div class="prow alt"><i></i><b>Angle</b><span>360,00 °</span></div>
<div class="prow"><i class="x"></i><b>Interval Axis</b><span>[0,00 mm  0,0...</span></div>
<div class="prow alt"><i></i><b>Number Polar</b><span>5</span></div>
<div class="prow grp">Polar/circular array</div>
<div class="prow alt"><i class="x"></i><b>Axis</b><span>[0,00 0,00 1,00]</span></div>
<div class="prow"><i class="x"></i><b>Center</b><span>[1551,00 mm ...</span></div>
</div></div>
<div class="sb d-flex flex-column"><div style="height:15px;border-bottom:1px solid #bbb"><svg width="8" height="5"><path d="M0 4.500h8l-4-4z" fill="#555"/></svg></div><div style="height:37px;background:#e4e4e4;border-bottom:1px solid #bbb"></div><div class="mt-auto" style="height:15px;border-top:1px solid #bbb"><svg width="8" height="5"><path d="M0 .5h8l-4 4z" fill="#555"/></svg></div></div>
<div style="background:#efefef;flex:1;border-left:1px solid #bbb"></div>
</div>
<div class="d-flex" style="height:26px"><span class="tab-b" style="width:54px;height:22px;line-height:22px;border-top:0;background:#e6e6e6;border-radius:0 0 3px 3px;padding-right:2px">View</span><span class="tab-b" style="width:53px;height:24px;line-height:24px;border-top:0;background:#fafafa;border-radius:0 0 3px 3px;margin-left:-1px">Data</span></div>
<div class="d-flex" style="height:19px"><span class="tab-b" style="width:99px;line-height:22px;background:#dcdcdc;border-bottom:0">Combo View</span><span style="width:107px;line-height:25px;text-align:center;background:#f4f4f4;border-right:1px solid #aaa">Property view</span><span class="flex-grow-1" style="border-top:1px solid #aaa"></span></div>
</section>
</main>
</body>
</html>
